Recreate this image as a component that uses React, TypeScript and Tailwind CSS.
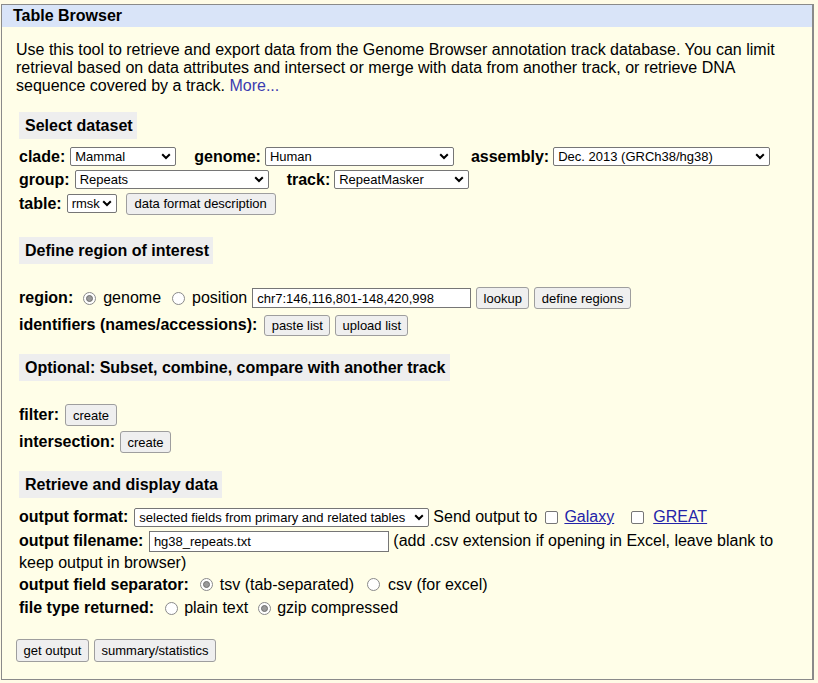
import React from 'react';

const font = { fontFamily: '"Liberation Sans", Arial, sans-serif' };

const Select = ({ value, w, cls = '' }: { value: string; w: string; cls?: string }) => (
  <span className={`relative block h-[19px] shrink-0 ${w} ${cls}`}>
    <select
      defaultValue={value}
      className="block h-[19px] w-full appearance-none rounded-[2px] border border-[#767676] bg-white pl-[4px] pr-[14px] text-[13px] leading-[17px] text-black outline-none"
    >
      <option>{value}</option>
    </select>
    <svg
      className="pointer-events-none absolute right-[5px] top-[6px]"
      width="10"
      height="7"
      viewBox="0 0 10 7"
      fill="none"
    >
      <path d="M1.2 1.2L5 5L8.8 1.2" stroke="#000" strokeWidth="2" />
    </svg>
  </span>
);

const Btn = ({ children, w, h = 'h-[22px]', cls = '' }: { children: React.ReactNode; w: string; h?: string; cls?: string }) => (
  <button
    className={`inline-flex shrink-0 items-center justify-center rounded-[3px] border border-[#9e9e9e] bg-[#efefef] text-[13px] leading-none text-black ${w} ${h} ${cls}`}
  >
    {children}
  </button>
);

const Radio = ({ checked, cls = '' }: { checked?: boolean; cls?: string }) => (
  <span
    className={`inline-flex h-[13px] w-[13px] shrink-0 items-center justify-center rounded-full border border-[#8a8a8a] bg-white ${cls}`}
  >
    {checked && <span className="h-[7px] w-[7px] rounded-full border border-[#6f6f6f] bg-[#9a9a9a]" />}
  </span>
);

const Check = ({ cls = '' }: { cls?: string }) => (
  <span className={`block h-[13px] w-[13px] shrink-0 rounded-[2px] border border-[#767676] bg-white ${cls}`} />
);

const Section = ({ title, w }: { title: string; w: string }) => (
  <div className={`flex h-[27px] items-center bg-[#eeeeee] pl-[6px] text-[16px] font-bold ${w}`}>
    {title}
  </div>
);

export default function App() {
  return (
    <div className="min-h-[683px] bg-[#fffbe6] pt-[4px] pl-[1px] text-black" style={font}>
      <div className="w-[813px] border border-r-2 border-[#8a8a8a] bg-[#fffee8] pb-[17px]">
        <div className="flex h-[22px] items-center bg-[#d9e4f8] pl-[11px] text-[16px] font-bold">
          Table Browser
        </div>

        <div className="pl-[14px] pr-[11px]">
          <p className="mt-[14px] text-[16px] leading-[18px]">
            Use this tool to retrieve and export data from the Genome Browser annotation track database. You can
            limit retrieval based on data attributes and intersect or merge with data from another track, or retrieve
            DNA sequence covered by a track. <a className="text-[#3b3bb0]">More...</a>
          </p>

          <div className="pl-[3px]">
            <div className="mt-[17px]">
              <Section title="Select dataset" w="w-[118px]" />
            </div>

            <div className="mt-[6px] text-[16px]">
              <div className="flex h-[23px] items-center">
                <b>clade:</b>
                <Select value="Mammal" w="w-[106px]" cls="ml-[5px]" />
                <b className="ml-[18px]">genome:</b>
                <Select value="Human" w="w-[189px]" cls="ml-[4px]" />
                <b className="ml-[17px]">assembly:</b>
                <Select value="Dec. 2013 (GRCh38/hg38)" w="w-[217px]" cls="ml-[4px]" />
              </div>
              <div className="flex h-[23px] items-center">
                <b>group:</b>
                <Select value="Repeats" w="w-[194px]" cls="ml-[5px]" />
                <b className="ml-[18px]">track:</b>
                <Select value="RepeatMasker" w="w-[135px]" cls="ml-[4px]" />
              </div>
              <div className="flex h-[25px] items-center">
                <b>table:</b>
                <Select value="rmsk" w="w-[50px]" cls="ml-[5px]" />
                <Btn w="w-[150px]" cls="ml-[9px]">data format description</Btn>
              </div>
            </div>

            <div className="mt-[21px]">
              <Section title="Define region of interest" w="w-[194px]" />
            </div>

            <div className="mt-[22px] text-[16px]">
              <div className="flex h-[24px] items-center">
                <b>region:</b>
                <Radio checked cls="ml-[10px]" />
                <span className="ml-[7px]">genome</span>
                <Radio cls="ml-[11px]" />
                <span className="ml-[7px]">position</span>
                <input
                  defaultValue="chr7:146,116,801-148,420,998"
                  className="ml-[5px] h-[20px] w-[219px] border border-[#767676] bg-white pl-[4px] text-[13px] outline-none"
                />
                <Btn w="w-[53px]" cls="ml-[5px]">lookup</Btn>
                <Btn w="w-[97px]" cls="ml-[5px]">define regions</Btn>
              </div>
              <div className="mt-[3px] flex h-[24px] items-center">
                <b>identifiers (names/accessions):</b>
                <Btn w="w-[66px]" h="h-[21px]" cls="ml-[7px]">paste list</Btn>
                <Btn w="w-[73px]" h="h-[21px]" cls="ml-[5px]">upload list</Btn>
              </div>
            </div>

            <div className="mt-[17px]">
              <Section title="Optional: Subset, combine, compare with another track" w="w-[431px]" />
            </div>

            <div className="mt-[22px] text-[16px]">
              <div className="flex h-[24px] items-center">
                <b>filter:</b>
                <Btn w="w-[52px]" cls="ml-[6px]">create</Btn>
              </div>
              <div className="mt-[3px] flex h-[24px] items-center">
                <b>intersection:</b>
                <Btn w="w-[51px]" cls="ml-[5px]">create</Btn>
              </div>
            </div>

            <div className="mt-[17px]">
              <Section title="Retrieve and display data" w="w-[203px]" />
            </div>

            <div className="mt-[8px] text-[16px]">
              <div className="flex h-[22px] items-center">
                <b>output format:</b>
                <Select value="selected fields from primary and related tables" w="w-[295px]" cls="ml-[6px]" />
                <span className="ml-[4px]">Send output to</span>
                <Check cls="ml-[8px]" />
                <a className="ml-[6px] text-[#2424a8] underline">Galaxy</a>
                <Check cls="ml-[17px]" />
                <a className="ml-[9px] text-[#2424a8] underline">GREAT</a>
              </div>
              <div className="mt-[2px] leading-[21px]">
                <b>output filename:</b>{' '}
                <input
                  defaultValue="hg38_repeats.txt"
                  className="ml-[1px] h-[21px] w-[240px] border border-[#767676] bg-white pl-[4px] align-middle text-[13px] outline-none"
                />{' '}
                (add .csv extension if opening in Excel, leave blank to keep output in browser)
              </div>
              <div className="flex h-[23px] items-center">
                <b>output field separator:</b>
                <Radio checked cls="ml-[11px]" />
                <span className="ml-[7px]">tsv (tab-separated)</span>
                <Radio cls="ml-[13px]" />
                <span className="ml-[8px]">csv (for excel)</span>
              </div>
              <div className="flex h-[24px] items-center">
                <b>file type returned:</b>
                <Radio cls="ml-[11px]" />
                <span className="ml-[6px]">plain text</span>
                <Radio checked cls="ml-[10px]" />
                <span className="ml-[6px]">gzip compressed</span>
              </div>
            </div>
          </div>

          <div className="mt-[19px] flex gap-[5px]">
            <Btn w="w-[73px]" h="h-[23px]">get output</Btn>
            <Btn w="w-[122px]" h="h-[23px]">summary/statistics</Btn>
          </div>
        </div>
      </div>
    </div>
  );
}
